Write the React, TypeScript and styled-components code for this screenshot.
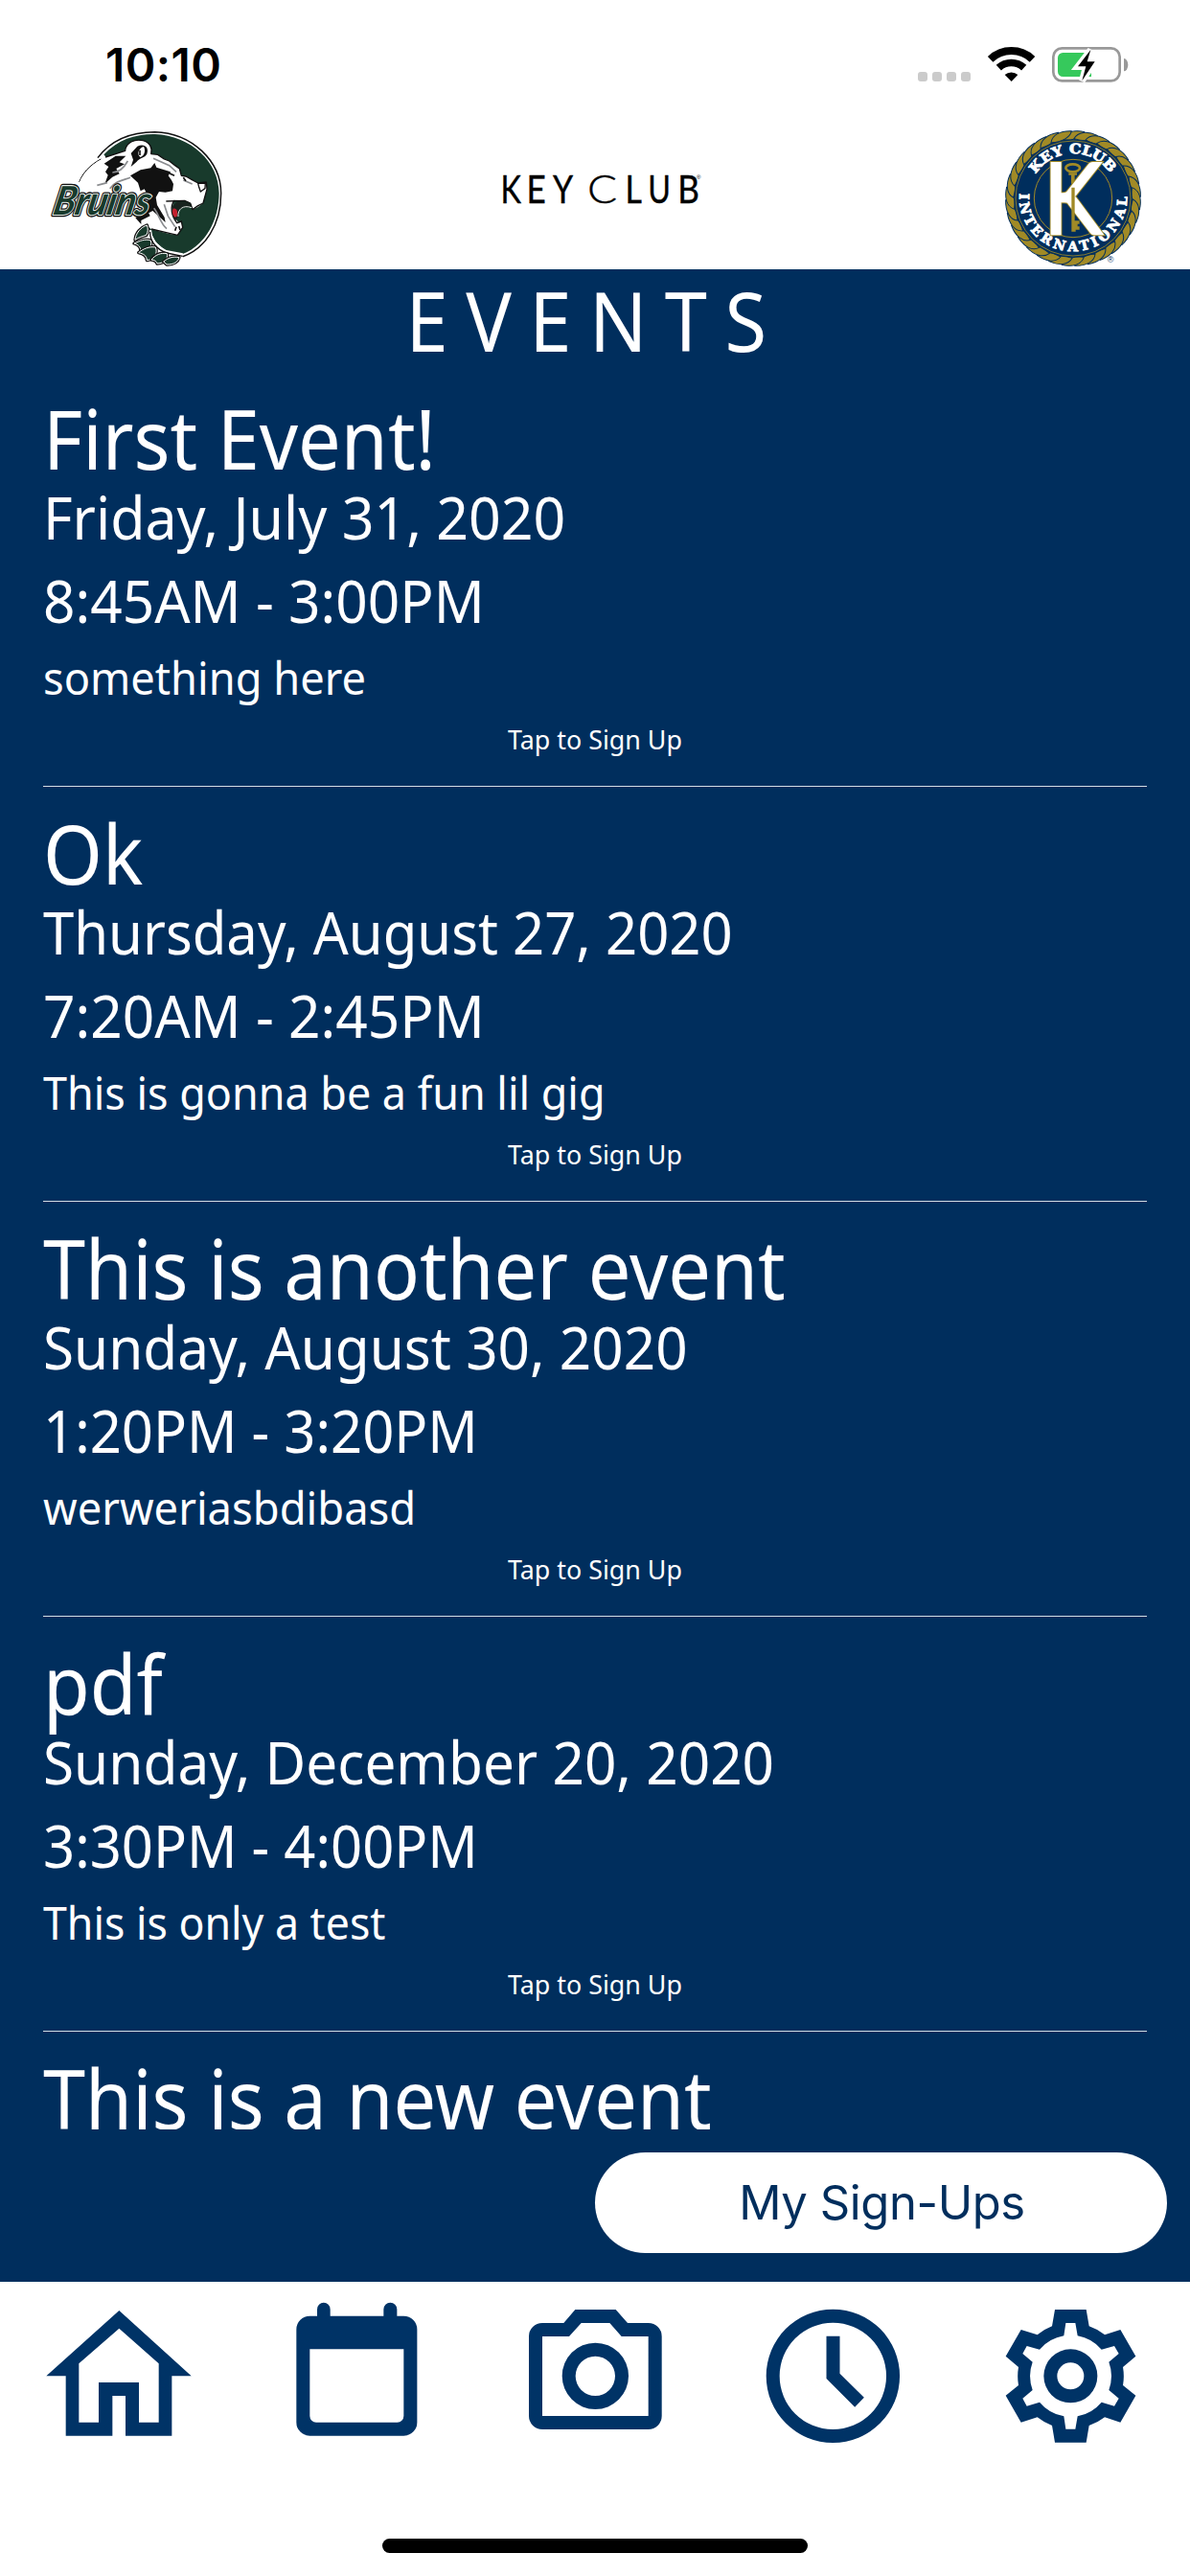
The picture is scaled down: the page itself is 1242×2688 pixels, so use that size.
import React from "react";
import styled, { createGlobalStyle } from "styled-components";

const NAVY = "#002e5d";
const ICON = "#003366";
const GREEN = "#183a2c";
const GOLD = "#a18a26";

const GlobalStyle = createGlobalStyle`
  html, body { margin: 0; padding: 0; background: #fff; }
  * { box-sizing: border-box; }
`;

const Screen = styled.div`
  width: 1242px;
  height: 2688px;
  display: flex;
  flex-direction: column;
  overflow: hidden;
  background: #fff;
  font-family: "Noto Sans", "Open Sans", sans-serif;
`;

const StatusBar = styled.div`
  height: 120px;
  flex: none;
  display: flex;
  justify-content: space-between;
  padding: 30px 42px 0 110px;
`;

const Clock = styled.time`
  font: 600 48px/76px Inter, sans-serif;
  letter-spacing: 0.4px;
`;

const StatusIcons = styled.svg`
  width: 270px;
  height: 80px;
`;

const Header = styled.header`
  height: 161px;
  flex: none;
  display: flex;
  justify-content: space-between;
  padding: 0 32px 0 30px;
`;

const HeaderArt = styled.svg<{ $width: number }>`
  width: ${(p) => p.$width}px;
  height: 161px;
  flex: none;
`;

const Main = styled.main`
  height: 2100px;
  flex: none;
  display: flex;
  flex-direction: column;
  background: ${NAVY};
  color: #fff;
`;

const Heading = styled.h1`
  margin: 0;
  height: 107px;
  flex: none;
  text-align: center;
  font-weight: 400;
  font-size: 85.5px;
  line-height: 106px;
  letter-spacing: 19.8px;
  transform: scaleX(0.93);
`;

const EventList = styled.div`
  height: 1834px;
  flex: none;
  overflow: hidden;
  padding: 0 45px;
`;

const EventCard = styled.article`
  height: 433px;
  padding-top: 19px;
  display: flex;
  flex-direction: column;
  border-bottom: 1.5px solid #d5dce4;
`;

const Line = styled.div<{ $stretch: number }>`
  flex: none;
  white-space: nowrap;
  transform: scaleX(${(p) => p.$stretch});
  transform-origin: left;
`;

const Title = styled(Line)`
  font-size: 85.5px;
  line-height: 101px;
  margin-bottom: -1px;
`;

const When = styled(Line)`
  font-size: 62.5px;
  line-height: 64px;
  margin-bottom: 23px;
`;

const Description = styled(Line)`
  font-size: 47px;
  line-height: 60px;
  margin: -4px 0 16px;
`;

const SignUpHint = styled(Line)`
  text-align: center;
  transform-origin: center;
  font-size: 28px;
  line-height: 36px;
`;

const ActionRow = styled.div`
  flex: 1;
  display: flex;
  justify-content: flex-end;
  align-items: flex-start;
  padding: 24px 24px 0;
`;

const SignUpsButton = styled.button`
  width: 597px;
  height: 105px;
  border: 0;
  border-radius: 53px;
  padding: 1px 0 0 2px;
  background: #fff;
  color: ${NAVY};
  font: 400 49px/104px Inter, sans-serif;
  letter-spacing: -0.4px;
`;

const TabBar = styled.nav`
  height: 268px;
  flex: none;
  display: grid;
  grid-template-columns: repeat(5, 1fr);
  justify-items: center;
  padding-top: 14.7px;
`;

const TabIcon = styled.svg`
  width: 166.7px;
  height: 166.7px;
  fill: ${ICON};
  fill-rule: evenodd;
`;

const HomeIndicator = styled.div`
  width: 444px;
  height: 15px;
  flex: none;
  align-self: center;
  border-radius: 8px;
  background: #000;
`;

const events = [
  { title: "First Event!", date: "Friday, July 31, 2020", time: "8:45AM - 3:00PM", text: "something here", dateFit: 0.944, timeFit: 0.937, textFit: 0.962 },
  { title: "Ok", date: "Thursday, August 27, 2020", time: "7:20AM - 2:45PM", text: "This is gonna be a fun lil gig", dateFit: 0.928, timeFit: 0.937, textFit: 0.955 },
  { title: "This is another event", date: "Sunday, August 30, 2020", time: "1:20PM - 3:20PM", text: "werweriasbdibasd", dateFit: 0.935, timeFit: 0.927, textFit: 0.965 },
  { title: "pdf", date: "Sunday, December 20, 2020", time: "3:30PM - 4:00PM", text: "This is only a test", dateFit: 0.936, timeFit: 0.927, textFit: 0.95 },
  { title: "This is a new event", date: "", time: "", text: "", dateFit: 1, timeFit: 1, textFit: 1 },
];

const tabs = [
  {
    name: "Home",
    box: "33 47 500 500",
    d: "M283 92 509 297H448V484H303V359H262V484H116V297H55ZM283 148 157 258V442H219V317H345V442H407V258Z",
  },
  {
    name: "Calendar",
    box: "777 47 500 500",
    d: "M880 109H903V88a20.5 20.5 0 0 1 41 0V109H1111V88a21 21 0 0 1 42 0V109H1174a42 42 0 0 1 42 42V442a42 42 0 0 1-42 42H880a42 42 0 0 1-42-42V151a42 42 0 0 1 42-42ZM880 213V422a20 20 0 0 0 20 20H1154a20 20 0 0 0 20-20V213Z",
  },
  {
    name: "Camera",
    box: "23 47 500 500",
    d: "M107 131H174L210 89H337L374 131H439a42 42 0 0 1 42 42V422a42 42 0 0 1-42 42H107a42 42 0 0 1-42-42V173a42 42 0 0 1 42-42ZM107 173V422H439V173H355L318 131H229L191 173ZM273 193a104 104 0 1 1 0 208a104 104 0 0 1 0-208ZM273 235a62 62 0 1 0 0 124a62 62 0 0 0 0-124Z",
  },
  {
    name: "Hours",
    box: "768.5 47 500 500",
    d: "M1018.5 88a209 209 0 1 1 0 418a209 209 0 0 1 0-418ZM1018.5 130a167 167 0 1 0 0 334a167 167 0 0 0 0-334ZM998 172H1040V289L1116 364 1087 394 998 305Z",
  },
  {
    name: "Settings",
    box: "44 47 500 500",
    d: "M245 89H343L352 141A166 166 0 0 1 401 168L450 152 498 235 458 269A166 166 0 0 1 458 326L498 358 450 442 401 426A166 166 0 0 1 352 452L343 505H245L236 452A166 166 0 0 1 190 426L139 442 91 358 131 326A166 166 0 0 1 131 269L91 235 139 152 190 168A166 166 0 0 1 236 141ZM279 131 273 171A130 130 0 0 0 197 214L157 203 144 227 175 253A130 130 0 0 0 175 341L144 367 157 391 197 379A130 130 0 0 0 273 423L279 463H309L316 423A130 130 0 0 0 391 379L431 391 445 367 414 341A130 130 0 0 0 414 253L445 227 431 203 391 214A130 130 0 0 0 316 171L309 131ZM294 213a84 84 0 1 1 0 168a84 84 0 0 1 0-168ZM294 255a42 42 0 1 0 0 84a42 42 0 0 0 0-84Z",
  },
];

const wordmark = [
  { letter: "K", x: 522.6, fit: 0.8, weight: 400 },
  { letter: "E", x: 549.4, fit: 0.87, weight: 400 },
  { letter: "Y", x: 577, fit: 0.84, weight: 400 },
  { letter: "C", x: 613, fit: 1.14, weight: 300 },
  { letter: "L", x: 652.4, fit: 0.84, weight: 400 },
  { letter: "U", x: 676.3, fit: 0.8, weight: 400 },
  { letter: "B", x: 707.2, fit: 0.87, weight: 400 },
];

const claws = [
  "M333 391C335 370 350 352 370 345C374 356 374 366 368 376C358 380 344 382 333 391Z",
  "M330 402C345 395 366 386 382 393C388 410 376 426 350 428C352 414 344 406 330 402Z",
  "M344 431C356 420 378 410 397 414C404 430 396 452 370 455C370 440 358 434 344 431Z",
  "M384 453C396 438 414 430 433 434C436 448 428 464 402 465C400 458 394 454 384 453Z",
  "M422 459C436 447 452 442 471 446C468 458 456 469 432 468Z",
];

const StatusGlyphs = () => (
  <StatusIcons viewBox="0 0 810 240">
    {[84, 129, 174, 219].map((x) => (
      <rect key={x} x={x} y="135" width="30" height="30" rx="9" fill="#cbcbcb" />
    ))}
    <path d="M311 95.500A95.500 95.500 0 0 1 442.500 95.500" fill="none" stroke="#000" strokeWidth="24" />
    <path d="M337 122A58 58 0 0 1 416 122" fill="none" stroke="#000" strokeWidth="23" />
    <path d="M377 165 356 144A31 31 0 0 1 397 144Z" />
    <rect x="508" y="61" width="208" height="102" rx="27" fill="none" stroke="#999" strokeWidth="8" />
    <path d="M538 75H627V150H538a16 16 0 0 1-16-16V91a16 16 0 0 1 16-16Z" fill="#36c95c" />
    <path d="M729 93a13 20 0 0 1 0 40Z" fill="#999" />
    <path d="M625 66 584 119H610L598 163 638 103H614Z" stroke="#fff" strokeWidth="20" fill="#fff" />
    <path d="M625 66 585 118H610L598 163 638 103H614Z" />
  </StatusIcons>
);

const BruinsLogo = () => (
  <HeaderArt $width={220} viewBox="0 0 660 483" role="img" aria-label="Bruins">
    <path d="M235 124C280 76 335 59 395 60C508 64 596 148 596 245C595 340 545 412 480 436L432 428 398 398 380 366 300 200Z" fill={GREEN} />
    <path d="M216 134C262 72 330 53 395 53C512 56 602 146 602 245C602 345 550 420 482 443" fill="none" stroke="#111" strokeWidth="4.500" />
    <path d="M158 210C168 182 192 156 226 138" fill="none" stroke="#111" strokeWidth="3" />
    <path
      d="M158 212C176 176 202 150 240 132L302 112C304 86 332 74 358 80C380 86 388 104 383 122L404 124 424 138 440 144 458 158 472 168 478 190 492 192 510 202 530 213 556 210 558 232 546 276 530 288 513 296 506 276 488 268 456 266 449 288 455 318 468 336 478 334 482 352 466 376 440 372 384 358 340 320 200 270Z"
      fill="#fff"
    />
    <path
      d="M240 132 302 112C304 86 332 74 358 80C380 86 388 104 383 122L404 124 424 138 440 144 458 158 472 168 478 190 492 192 510 202 530 213 556 210 558 232 546 276 530 284 513 296 506 276 488 268 430 270"
      fill="none"
      stroke="#111"
      strokeWidth="4"
      strokeLinejoin="bevel"
    />
    <path d="M456 267C440 288 448 318 464 338L478 333 482 352 466 376 440 370 384 357" fill="none" stroke="#111" strokeWidth="4" />
    <path d="M449 288 466 270 500 272 511 290C480 284 464 298 466 318L462 330C450 320 446 304 449 288Z" fill="#17231e" />
    <path d="M468 318C466 296 482 280 510 290" fill="none" stroke="#dfe5e1" strokeWidth="3" />
    <path d="M452 293C464 290 468 302 464 318L457 320C450 312 447 302 452 293Z" fill="#c3202d" />
    <path d="M530 214 553 213 552 230 538 240 533 226Z" fill="#fff" stroke="#111" strokeWidth="4" />
    <path d="M318 190 350 172 382 166 394 150 400 164 444 178 437 190 447 204 453 216 450 238 428 242 408 240 398 258 402 282 425 320 428 336 404 314 388 300 366 312 358 290 378 262 362 232 350 238 342 212Z" fill="#111" />
    <path d="M236 152 272 128 304 128 284 148 300 154 274 168 284 184 262 194 238 216 248 188 240 178 250 162Z" fill="#111" />
    <path d="M320 120 340 98C362 88 378 102 370 122C364 134 346 134 338 146L320 162 327 140Z" fill="#111" />
    <path d="M360 99C342 104 338 126 350 132C364 126 366 110 360 99Z" fill="#fff" />
    <path d="M348 110V126" stroke="#111" strokeWidth="5" />
    <path d="M214 220 246 212M262 180C284 180 300 162 310 144M254 230C272 206 296 204 318 196M390 136 440 158 462 178M392 292C408 312 412 340 432 356M424 280 436 316 458 350M484 204 512 216" fill="none" stroke="#8b8d90" strokeWidth="5" />
    <path d="M440 182 456 190M484 196 492 206M462 350 458 362M470 348 474 360" fill="none" stroke="#111" strokeWidth="5" />
    <path d="M334 322 372 300 380 316 352 330 352 342Z" fill="#111" />
    <path d="M380 360C378 384 396 412 430 428L482 438" fill="none" stroke="#fff" strokeWidth="10" />
    <path d="M380 366C378 392 398 420 432 432L482 442" fill="none" stroke="#111" strokeWidth="4" />
    <g strokeLinejoin="round">
      {claws.map((d) => (
        <g key={d}>
          <path d={d} fill="#111" stroke="#111" strokeWidth="10" />
          <path d={d} fill={GREEN} stroke="#fff" strokeWidth="3" />
        </g>
      ))}
    </g>
    <g
      transform="translate(72 312) skewX(-12)"
      fontFamily="Lato, sans-serif"
      fontStyle="italic"
      fontWeight="700"
      fontSize="124"
      strokeLinejoin="round"
      paintOrder="stroke"
      fill={GREEN}
    >
      <text textLength="302" lengthAdjust="spacingAndGlyphs" stroke="#111" strokeWidth="14">Bruins</text>
      <text aria-hidden textLength="302" lengthAdjust="spacingAndGlyphs" stroke="#e8efea" strokeWidth="6">Bruins</text>
    </g>
  </HeaderArt>
);

const KeyClubWordmark = () => (
  <HeaderArt $width={300} viewBox="490 120 300 161" role="img" aria-label="Key Club">
    <g fontFamily="Lato, sans-serif" fontSize="40.300" stroke="#000" strokeWidth="0.400">
      {wordmark.map((glyph) => (
        <text key={glyph.letter} fontWeight={glyph.weight} transform={`translate(${glyph.x} 212) scale(${glyph.fit} 1)`}>
          {glyph.letter}
        </text>
      ))}
    </g>
    <text x="727" y="186.500" fontFamily="Liberation Sans, sans-serif" fontSize="6">®</text>
  </HeaderArt>
);

const KeyClubSeal = () => (
  <HeaderArt $width={180} viewBox="0 -15 540 483" role="img" aria-label="Key Club International">
    <defs>
      <path id="sealTop" d="M153 170A138 138 0 0 1 387 170" />
      <path id="sealBottom" d="M102 230A168.500 168.500 0 1 0 438 230" />
    </defs>
    <circle cx="270" cy="246" r="203" fill={NAVY} />
    {Array.from({ length: 32 }, (_, i) => (
      <path
        key={i}
        transform={`rotate(${i * 11.25} 270 246)`}
        d="M236 62C244 38 272 30 306 38C300 56 272 66 236 62Z"
        fill={GOLD}
        stroke={NAVY}
        strokeWidth="3"
      />
    ))}
    <circle cx="270" cy="246" r="182" fill={NAVY} />
    <circle cx="270" cy="246" r="180" fill="none" stroke={GOLD} strokeWidth="2.500" />
    <circle cx="270" cy="246" r="122" fill="none" stroke={GOLD} strokeWidth="3" />
    <g fontFamily="DejaVu Serif, serif" fontWeight="700" fontSize="42" fill="#fff" stroke="#fff" strokeWidth="2.500">
      <text><textPath href="#sealTop" textLength="276" lengthAdjust="spacingAndGlyphs">KEY CLUB</textPath></text>
      <text><textPath href="#sealBottom" textLength="544" lengthAdjust="spacing">INTERNATIONAL</textPath></text>
    </g>
    <ellipse cx="269" cy="151" rx="22" ry="12" fill="none" stroke={GOLD} strokeWidth="8" />
    <path d="M256 166H282V173H275V200H264V173H256Z" fill={GOLD} />
    <g transform="translate(178 356) scale(0.900 1)" fontFamily="Lato, sans-serif" fontSize="306" fill="#fff">
      <text stroke={GOLD} strokeWidth="13">K</text>
      <text aria-hidden stroke="#fff" strokeWidth="7">K</text>
    </g>
    <path d="M265 212H275V316H290V326H284V334H290V344H278V350H265Z" fill={GOLD} />
    <text x="377" y="446" fontFamily="Liberation Sans, sans-serif" fontSize="27" fill={NAVY}>®</text>
  </HeaderArt>
);

export default function App() {
  return (
    <Screen>
      <GlobalStyle />
      <StatusBar>
        <Clock>10:10</Clock>
        <StatusGlyphs />
      </StatusBar>
      <Header>
        <BruinsLogo />
        <KeyClubWordmark />
        <KeyClubSeal />
      </Header>
      <Main>
        <Heading>EVENTS</Heading>
        <EventList>
          {events.map((event) => (
            <EventCard key={event.title}>
              <Title $stretch={0.928}>{event.title}</Title>
              {event.date && (
                <>
                  <When $stretch={event.dateFit}>{event.date}</When>
                  <When $stretch={event.timeFit}>{event.time}</When>
                  <Description $stretch={event.textFit}>{event.text}</Description>
                  <SignUpHint $stretch={0.958}>Tap to Sign Up</SignUpHint>
                </>
              )}
            </EventCard>
          ))}
        </EventList>
        <ActionRow>
          <SignUpsButton>My Sign-Ups</SignUpsButton>
        </ActionRow>
      </Main>
      <TabBar>
        {tabs.map((tab) => (
          <TabIcon key={tab.name} viewBox={tab.box} role="img" aria-label={tab.name}>
            <path d={tab.d} />
          </TabIcon>
        ))}
      </TabBar>
      <HomeIndicator />
    </Screen>
  );
}
